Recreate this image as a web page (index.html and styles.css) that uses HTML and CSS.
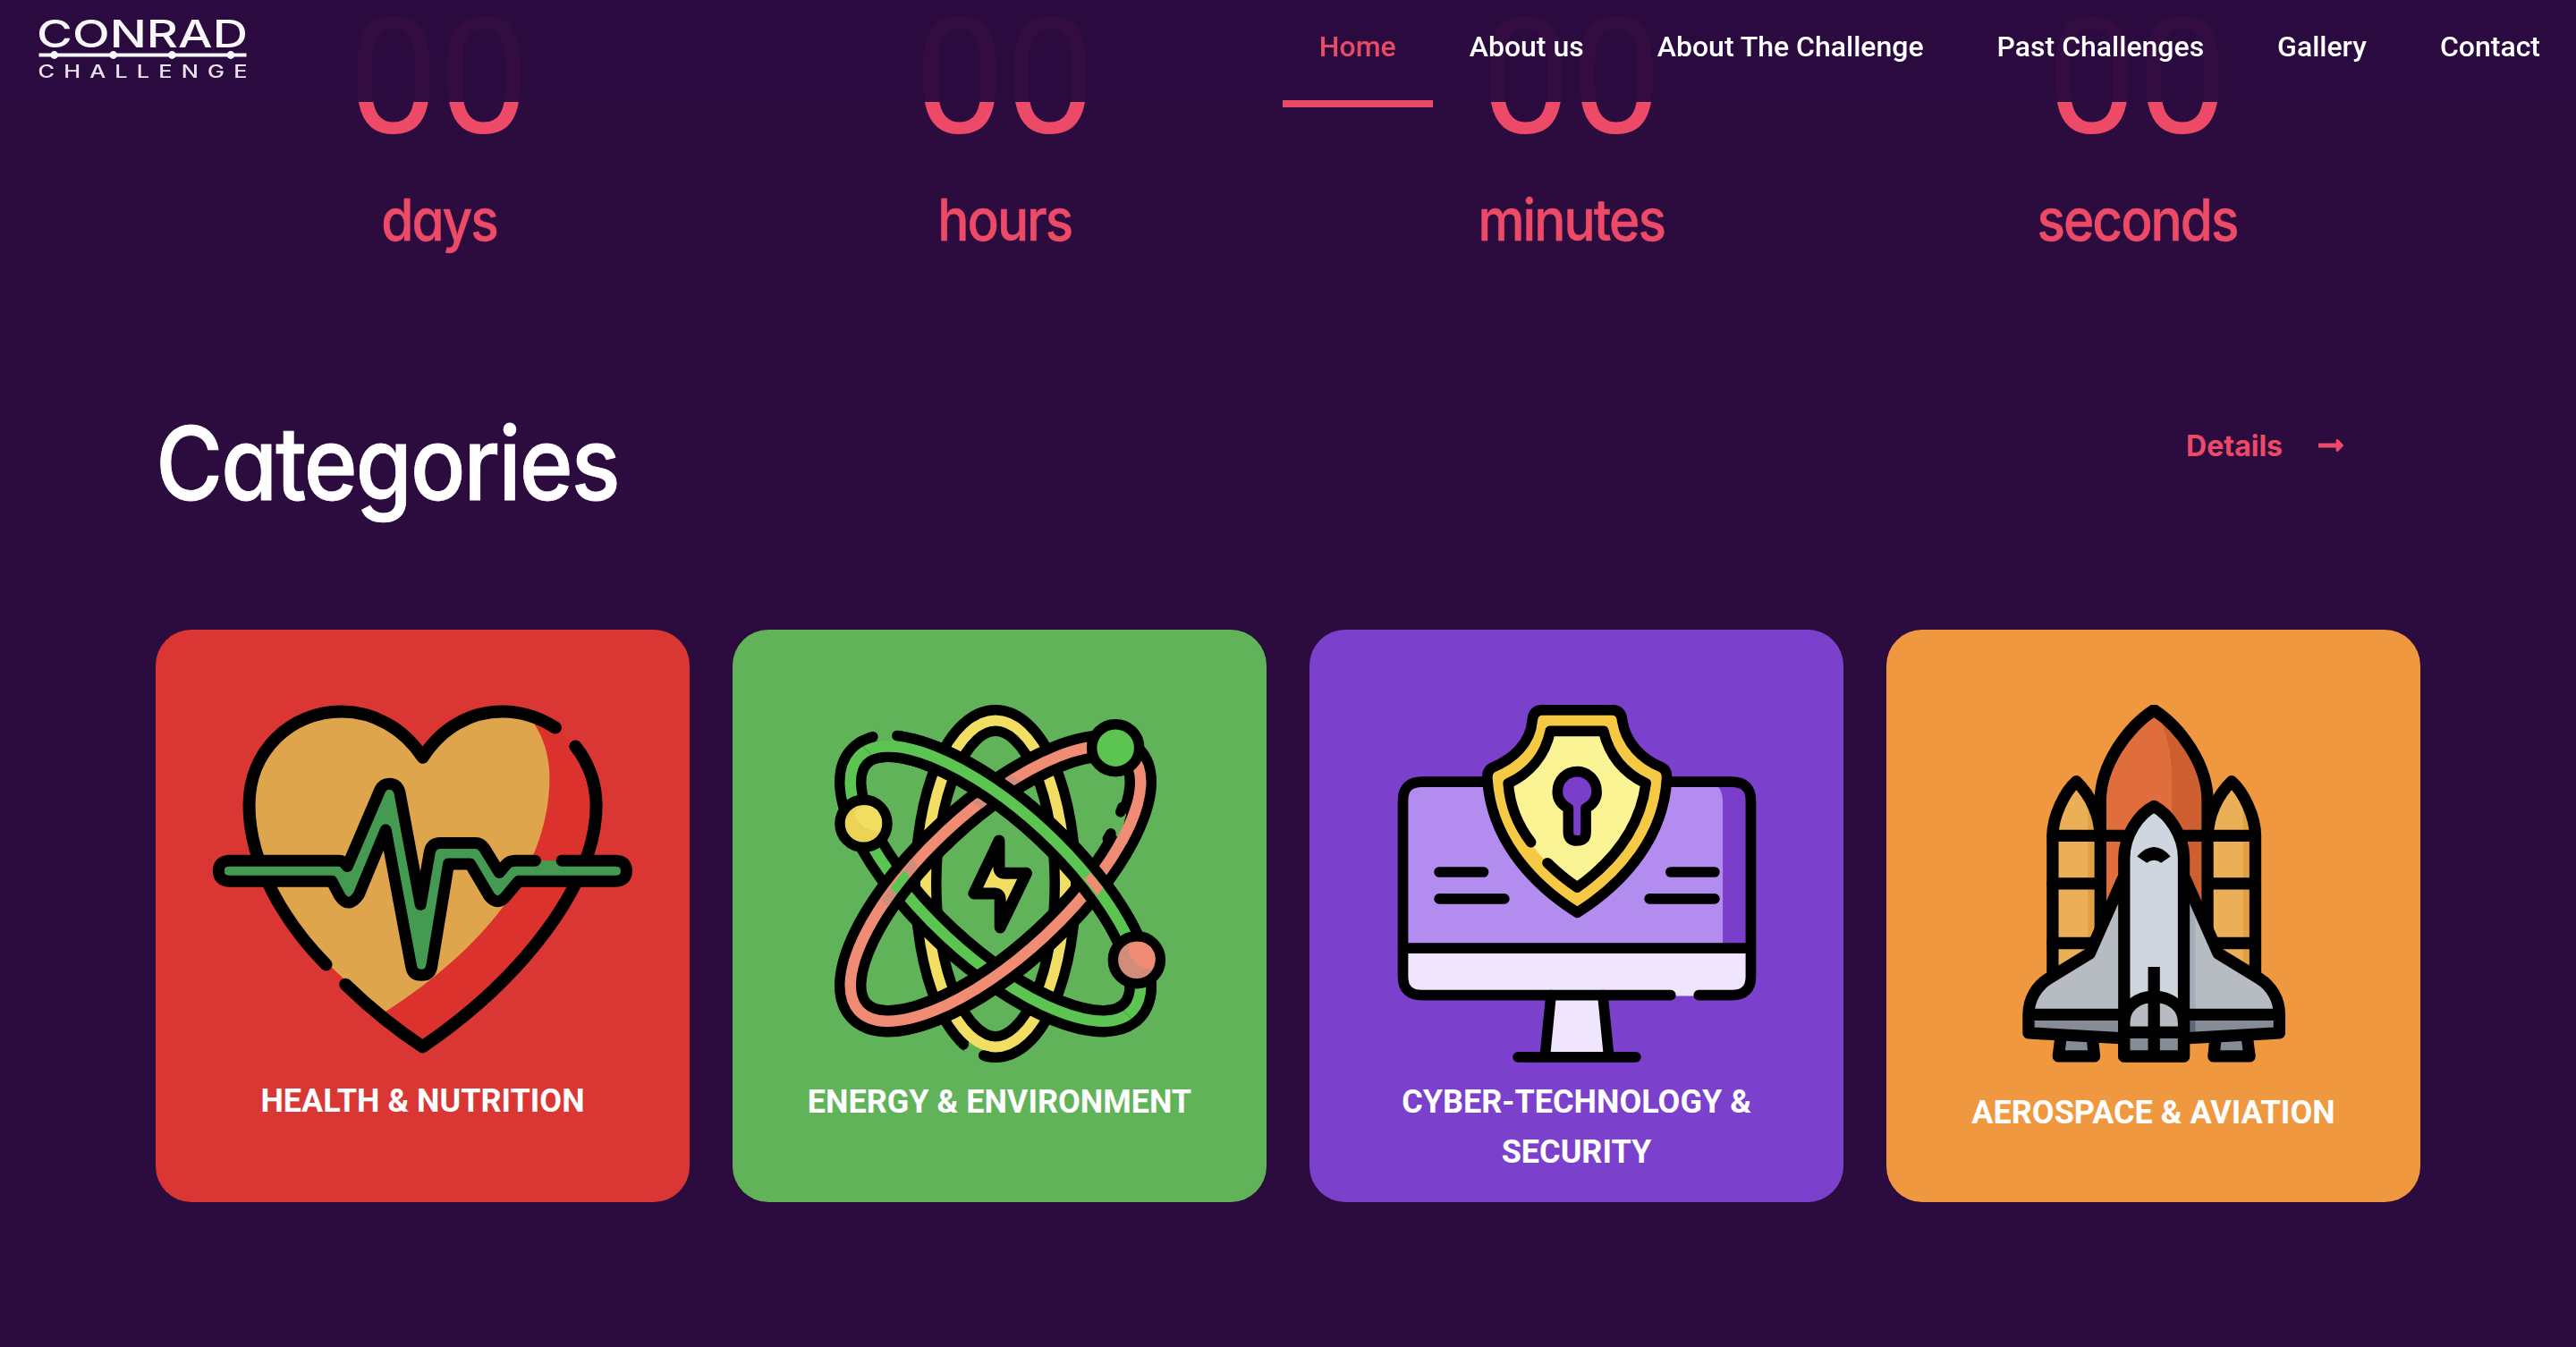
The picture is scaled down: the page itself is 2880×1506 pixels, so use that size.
FILE: index.html
```html
<!DOCTYPE html>
<html lang="en">
<head>
<meta charset="utf-8">
<title>Conrad Challenge</title>
<link rel="stylesheet" href="styles.css">
</head>
<body>
<header class="site-header">
  <a class="logo" href="#">
    <svg width="240" height="80" viewBox="40 14 240 80" role="img" aria-label="Conrad Challenge">
      <text class="logo-name" x="41" y="52.5" textLength="236" lengthAdjust="spacingAndGlyphs">CONRAD</text>
      <path class="logo-line" d="M43.5 61.5H275.5"/>
      <g class="logo-dots"><circle cx="60.7" cy="61.5" r="4.4"/><circle cx="126.7" cy="61.5" r="4.4"/><circle cx="192.3" cy="61.5" r="4.4"/><circle cx="258" cy="61.5" r="4.4"/></g>
      <text class="logo-sub" transform="translate(42.5 86.5) scale(1.3 1)" x="0" y="0" textLength="180" lengthAdjust="spacing">CHALLENGE</text>
    </svg>
  </a>
  <nav class="nav">
    <a class="nav-item active" href="#">Home</a>
    <a class="nav-item" href="#">About us</a>
    <a class="nav-item" href="#">About The Challenge</a>
    <a class="nav-item" href="#">Past Challenges</a>
    <a class="nav-item" href="#">Gallery</a>
    <a class="nav-item" href="#">Contact</a>
  </nav>
</header>
<main class="page">
  <section class="countdown">
    <div class="unit"><span class="digits">00</span><span class="label">days</span></div>
    <div class="unit"><span class="digits">00</span><span class="label">hours</span></div>
    <div class="unit"><span class="digits">00</span><span class="label">minutes</span></div>
    <div class="unit"><span class="digits">00</span><span class="label">seconds</span></div>
  </section>
  <section class="section-head">
    <h2 class="title">Categories</h2>
    <a class="details" href="#">Details
      <svg class="arrow" viewBox="0 0 448 512"><path d="M313.941 216H12c-6.627 0-12 5.373-12 12v56c0 6.627 5.373 12 12 12h301.941v46.059c0 21.382 25.851 32.09 40.971 16.971l86.059-86.059c9.373-9.373 9.373-24.569 0-33.941l-86.059-86.059c-15.119-15.119-40.971-4.411-40.971 16.971V216z"/></svg>
    </a>
  </section>
  <section class="cards">
    <article class="card health">
      <svg class="art" viewBox="0 0 597 400">
        <g transform="translate(-14 -98) scale(.40179 .42729)">
          <path fill="#db322e" d="M778 1122C400 890 295 650 295 492C295 350 410 247 553 247C640 247 725 290 778 367C830 290 910 247 1000 247C1150 250 1261 360 1261 492C1261 700 1050 950 778 1122Z"/>
          <path fill="#dea54d" d="M675 1032C400 850 295 650 295 492C295 350 410 247 553 247C640 247 725 290 778 367C830 290 910 247 1000 247Q1050 250 1083 272C1112 310 1131 360 1131 420C1130 690 900 895 675 1032Z"/>
          <g class="line heavy">
            <path d="M509 909C400 805 295 650 295 492C295 350 410 247 553 247C640 247 725 290 778 367C830 290 910 247 1000 247C1055 247 1105 264 1147 289"/>
            <path d="M1203 338C1240 382 1260 435 1261 492C1261 700 1050 950 778 1124C700 1076 630 1022 563 961"/>
          </g>
          <path fill="#459a52" d="M1165 637H1315Q1345 638 1345 664Q1345 690 1315 691H1045L1010 730Q988 757 963 730L910 646H850L803 915Q798 937 775 937Q750 937 746 915L675 557L600 727Q572 765 547 730L525 691H240Q210 690 210 664Q210 638 240 637H545Q558 637 568 652L659 452Q668 436 685 436Q707 436 714 458L772 752L797 615Q802 592 825 591H925Q940 591 950 605L991 668L1010 647Q1020 637 1035 637Z"/>
          <path class="line pulse" d="M1165 637H1315Q1345 638 1345 664Q1345 690 1315 691H1045L1010 730Q988 757 963 730L910 646H850L803 915Q798 937 775 937Q750 937 746 915L675 557L600 727Q572 765 547 730L525 691H240Q210 690 210 664Q210 638 240 637H545Q558 637 568 652L659 452Q668 436 685 436Q707 436 714 458L772 752L797 615Q802 592 825 591H925Q940 591 950 605L991 668L1010 647Q1020 637 1035 637H1091"/>
        </g>
      </svg>
      <h3 class="card-title">HEALTH &amp; NUTRITION</h3>
    </article>
    <article class="card energy">
      <svg class="art" viewBox="0 0 597 400">
        <defs>
          <clipPath id="upper"><path d="M100 0H597V400H494Z"/></clipPath>
          <clipPath id="gap-green"><path d="M155 20H187V56H155Z"/></clipPath>
          <clipPath id="gap-yellow"><path d="M256 370H282V400H256Z"/></clipPath>
          <clipPath id="gap-pink"><path d="M415 112H460V156H415Z"/></clipPath>
        </defs>
        <g fill="none">
          <ellipse cx="294" cy="200" rx="78" ry="182.5" stroke="#000" stroke-width="35"/>
          <ellipse cx="294" cy="200" rx="78" ry="182.5" stroke="#f1de63" stroke-width="12"/>
          <g transform="rotate(42.9 294 200)"><ellipse cx="294" cy="200" rx="208.5" ry="80.5" stroke="#000" stroke-width="35.5"/><ellipse cx="294" cy="200" rx="208.5" ry="80.5" stroke="#5cc552" stroke-width="12.5"/></g>
          <g transform="rotate(-42.9 294 200)"><ellipse cx="294" cy="200" rx="208.5" ry="80.5" stroke="#000" stroke-width="35.5"/><ellipse cx="294" cy="200" rx="208.5" ry="80.5" stroke="#f08b74" stroke-width="12.5"/></g>
          <g clip-path="url(#upper)"><g transform="rotate(42.9 294 200)"><ellipse cx="294" cy="200" rx="208.5" ry="80.5" stroke="#000" stroke-width="35.5"/><ellipse cx="294" cy="200" rx="208.5" ry="80.5" stroke="#5cc552" stroke-width="12.5"/></g></g>
        </g>
        <g transform="translate(-9 -98) scale(.40179 .42729)">
          <path fill="#5cc552" d="M461 708L500 662L516 680L478 726Z"/>
          <path fill="#d28c7b" d="M461 708L478 726L455 757L436 742ZM500 662L522 633L540 650L516 680ZM692 487L707 474L731 489L714 501ZM781 424L800 414L824 428L806 440Z"/>
          <path fill="#f08b74" d="M1002 686L1018 668L1054 708L1038 728Z"/>
          <path fill="#61b35a" d="M415 285H478V325H415ZM664 1128L684 1108L722 1135L718 1170H680ZM1066 548L1092 500L1118 515L1100 582Z"/>
        </g>
        <g fill="none">
          <g clip-path="url(#gap-yellow)"><ellipse cx="294" cy="200" rx="78" ry="182.5" stroke="#f1de63" stroke-width="12"/></g>
          <g clip-path="url(#gap-green)"><g transform="rotate(42.9 294 200)"><ellipse cx="294" cy="200" rx="208.5" ry="80.5" stroke="#5cc552" stroke-width="12.5"/></g></g>
          <g clip-path="url(#gap-pink)"><g transform="rotate(-42.9 294 200)"><ellipse cx="294" cy="200" rx="208.5" ry="80.5" stroke="#f08b74" stroke-width="12.5"/></g></g>
        </g>
        <g transform="translate(-9 -98) scale(.40179 .42729)">
          <g class="line thin">
            <path d="M413 313L404 315M480 310L492 311M665 1118L655 1108M721 1147L732 1149M1102 510L1107 497M1075 566L1066 580"/>
            <ellipse cx="1088" cy="342" rx="66" ry="62" fill="#5cc552"/>
            <ellipse cx="387" cy="540" rx="66" ry="62" fill="#edd353"/>
            <ellipse cx="1147" cy="897" rx="66" ry="62" fill="#d28c7b"/>
            <path fill="#f1de63" class="bolt" d="M764 585L694 723H752Q767 724 767 740V812L840 670H780Q764 670 764 655Z"/>
          </g>
          <path fill="#f1de63" d="M362 510Q372 556 428 560Q449 535 425 505Q392 478 362 510Z"/>
          <path fill="#f08b74" d="M1122 864Q1132 915 1188 921Q1211 890 1185 862Q1152 836 1122 864Z"/>
        </g>
      </svg>
      <h3 class="card-title">ENERGY &amp; ENVIRONMENT</h3>
    </article>
    <article class="card cyber">
      <svg class="art" viewBox="0 0 597 400">
        <g transform="translate(-14 -98) scale(.40179 .42729)">
          <path fill="#7a3ecb" d="M1100 431H1210Q1263 431 1263 480V866H1100Z"/>
          <path fill="#b38cf0" d="M295 866V480Q295 431 348 431H1150Q1185 440 1185 485V866Z"/>
          <path fill="#efe5fd" d="M295 866H1263V940Q1263 991 1210 991H348Q295 989 295 940ZM707 989H851L868 1150H690Z"/>
          <g class="line mid">
            <path d="M1118 989H1210Q1263 989 1263 940V480Q1263 431 1210 431H348Q295 431 295 480V940Q295 989 348 989H1040"/>
            <path d="M295 866H1263M707 989L690 1150M851 989L868 1150M615 1151H943M396 667H519M396 737H577M1040 667H1162M981 737H1162"/>
            <path fill="#f5c944" d="M680 243H880Q903 245 905 270C915 330 960 372 1015 393Q1032 402 1029 425C1020 570 920 690 780 773C640 690 540 570 530 425Q527 402 545 393C600 372 650 330 655 270Q657 245 680 243Z"/>
          </g>
          <path fill="#fbf495" d="M705 298H853C870 365 915 410 971 435C955 550 880 640 780 707C670 635 600 550 588 435C645 410 690 365 705 298Z"/>
          <g class="line mid">
            <path d="M697 643C722 666 750 688 780 707C880 640 955 550 971 435C915 410 870 365 853 298H705C690 365 645 410 588 435C592 490 615 545 651 589"/>
            <path fill="#7a3ecb" d="M755 500C735 490 725 475 725 457C725 425 750 404 780 404C810 404 834 427 834 457C834 475 824 490 804 500V563Q804 585 780 585Q755 585 755 563Z"/>
          </g>
        </g>
      </svg>
      <h3 class="card-title">CYBER-TECHNOLOGY &amp; SECURITY</h3>
    </article>
    <article class="card aero">
      <svg class="art" viewBox="0 0 597 400">
        <g transform="translate(-9 -98) scale(.40179 .42729)">
          <path fill="#ebb057" d="M485 940V572C485 520 520 455 551 430C590 460 617 520 617 572V940ZM1049 940V572C1049 520 1014 455 983 430C944 460 917 520 917 572V940Z"/>
          <path fill="#e3a040" d="M583 480H605V900H583ZM1015 500L1035 530V930H1015Z"/>
          <path fill="#e06e3c" d="M620 800V480C620 390 690 290 767 243C845 290 914 390 914 480V800Z"/>
          <path fill="#cd5f30" d="M784 265C845 300 914 390 914 480V800H817V430C817 370 808 320 784 265Z"/>
          <g class="line mid2">
            <path d="M485 935V572C485 520 520 455 551 430C590 465 617 520 617 572M1049 935V572C1049 520 1014 455 983 430C944 465 917 520 917 572"/>
            <path d="M618 820V480C618 390 690 290 767 243C845 290 916 390 916 480V820"/>
            <path d="M485 572H1049M485 697H617M917 697H1049M485 853H595M939 853H1049"/>
          </g>
          <path fill="#858c97" d="M418 1040H1116V1088L850 1102H683L418 1088ZM505 1105H597L602 1149H500ZM937 1105H1029L1034 1149H932Z"/>
          <path fill="#b7bbc2" d="M680 690L590 878L475 945C440 965 418 1000 418 1040H1116C1116 1000 1094 965 1059 945L944 878L854 690Z"/>
          <path fill="#a4adb8" d="M866 745L882 780V1030H866Z"/>
          <path fill="#5e6978" d="M866 1054H882V1090H866Z"/>
          <g class="line mid2">
            <path d="M680 685L588 880L475 945C440 965 418 1000 418 1040V1088L683 1102M854 685L946 880L1059 945C1094 965 1116 1000 1116 1040V1088L851 1102M418 1040H683M851 1040H1116"/>
            <path d="M507 1105L501 1149H601L596 1105M938 1105L933 1149H1033L1027 1105"/>
            <path fill="#d0d6df" d="M684 1149V630C684 570 725 515 767 495C808 515 850 570 850 630V1149Z"/>
            <path fill="#b7bbc2" d="M684 1087V1060C684 1020 720 993 767 993C814 993 850 1020 850 1060V1087Z"/>
            <path fill="#858c97" d="M684 1087H850V1149H684Z"/>
          </g>
          <path class="line mid2 flat" d="M767 915V1149"/>
          <path d="M720 626Q767 577 813 626L787 643Q767 629 747 643Z"/>
        </g>
      </svg>
      <h3 class="card-title">AEROSPACE &amp; AVIATION</h3>
    </article>
  </section>
</main>
</body>
</html>
```
FILE: styles.css
```css
* { box-sizing: border-box; }
body {
  margin: 0;
  background: #2c0b3f;
  color: #fff;
  font-family: Roboto, "Liberation Sans", sans-serif;
}
a { color: inherit; text-decoration: none; }
h2, h3 { margin: 0; }

.site-header {
  position: fixed;
  inset: 0 0 auto 0;
  z-index: 2;
  height: 114px;
  display: flex;
  justify-content: space-between;
  background: rgba(44, 11, 63, 0.965);
}
.logo { padding: 14px 0 0 40px; }
.logo svg { display: block; }
.logo-name { font: 500 42px Inter, sans-serif; fill: #f8f7fa; }
.logo-sub { font: 500 19.5px Inter, sans-serif; fill: #e9e4ee; }
.logo-line { stroke: #f8f7fa; stroke-width: 4; }
.logo-dots { fill: #f8f7fa; }

.nav { display: flex; height: 120px; }
.nav-item {
  padding: 0 41px;
  height: 120px;
  font-size: 32px;
  font-weight: 500;
  line-height: 104px;
  border-bottom: 8px solid transparent;
}
.nav-item:last-child { padding-right: 40px; }
.nav-item.active { color: #e94a66; border-bottom-color: #e94a66; }

.page { width: 2532px; margin: 0 auto; height: 1506px; overflow: hidden; }

.countdown {
  display: grid;
  grid-template-columns: repeat(4, 1fr);
  height: 400px;
  padding-top: 3px;
  color: #ed4a68;
}
.unit { display: flex; flex-direction: column; align-items: center; }
.digits { font-size: 180px; line-height: 168px; }
.label {
  margin-top: 31px;
  font: 500 65px/88px Inter, sans-serif;
  font-feature-settings: "cv11";
  letter-spacing: -2.2px;
  transform: scaleX(.9);
  -webkit-text-stroke: .5px currentColor;
}

.section-head {
  display: flex;
  justify-content: space-between;
  align-items: flex-start;
  height: 304px;
  padding: 52px 86px 0 0;
}
.title {
  font: 500 114px/132px Inter, sans-serif;
  font-feature-settings: "cv11";
  letter-spacing: -2.6px;
  transform: scaleX(.9);
  transform-origin: left;
  -webkit-text-stroke: .8px currentColor;
}
.details {
  display: flex;
  align-items: center;
  gap: 40px;
  height: 86px;
  margin-top: 3px;
  color: #ed4a68;
  font: 700 32px Inter, sans-serif;
}
.arrow { width: 28px; height: 32px; fill: currentColor; }

.cards { display: grid; grid-template-columns: repeat(4, 1fr); gap: 48px; }
.card { height: 640px; padding-top: 84px; border-radius: 40px; }
.art { display: block; width: 597px; height: 400px; }
.card-title {
  margin-top: 16px;
  padding: 0 80px;
  font-size: 36px;
  font-weight: 700;
  line-height: 56px;
  text-align: center;
}
.health { background: #da3633; }
.health .card-title { margin-top: 15px; }
.energy { background: #61b35a; }
.cyber { background: #7b41cc; }
.aero { background: #f0983f; }
.aero .card-title { margin-top: 28px; }

.line { stroke: #000; stroke-linecap: round; stroke-linejoin: round; }
.line:not(g), .line path:not([fill]) { fill: none; }
.line, .line * { vector-effect: non-scaling-stroke; }
.heavy { stroke-width: 14px; }
.pulse { stroke-width: 13px; }
.thin { stroke-width: 11.5px; }
.bolt { stroke-width: 13px; }
.mid { stroke-width: 11.7px; }
.mid2 { stroke-width: 13.3px; }
.flat { stroke-linecap: butt; }
```
